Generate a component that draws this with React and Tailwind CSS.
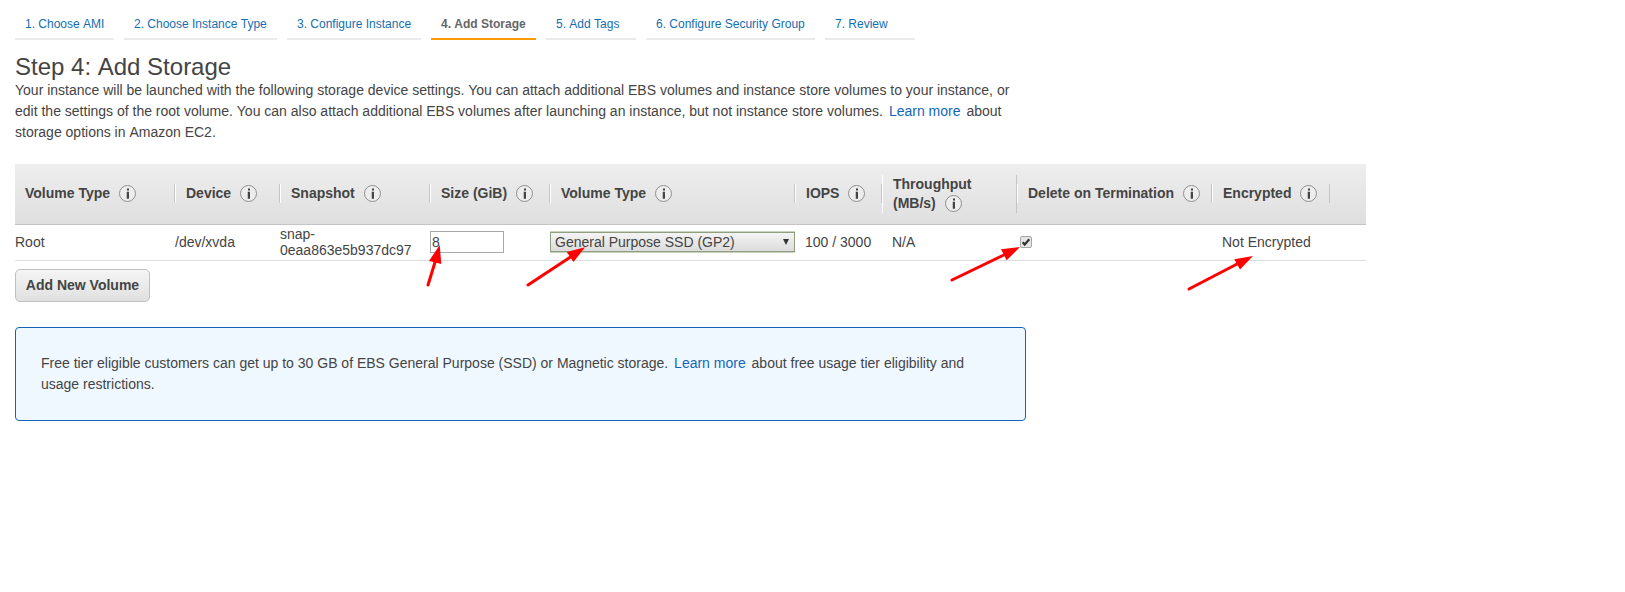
import React from "react";

const tabs = [
  { label: "1. Choose AMI", w: "w-[99px]" },
  { label: "2. Choose Instance Type", w: "w-[153px]" },
  { label: "3. Configure Instance", w: "w-[134px]" },
  { label: "4. Add Storage", w: "w-[105px]", active: true },
  { label: "5. Add Tags", w: "w-[90px]" },
  { label: "6. Configure Security Group", w: "w-[169px]" },
  { label: "7. Review", w: "w-[90px]" },
];

const columns = [
  { lines: ["Volume Type"], first: true },
  { lines: ["Device"] },
  { lines: ["Snapshot"] },
  { lines: ["Size (GiB)"] },
  { lines: ["Volume Type"] },
  { lines: ["IOPS"] },
  { lines: ["Throughput", "(MB/s)"] },
  { lines: ["Delete on Termination"] },
  { lines: ["Encrypted"] },
];

const grid = "grid grid-cols-[160px_105px_150px_120px_245px_87px_135px_195px_118px_36px]";

// Keeps words that start with A, T or Y from being kerned against the preceding space.
function Text({ children }) {
  return children
    .split(/(?<= )([ATY]\w*)/)
    .map((part, i) => (i % 2 ? <span key={i} className="inline-block">{part}</span> : part));
}

function Info() {
  return (
    <svg className="ml-[9px] h-[17px] w-[17px] shrink-0" viewBox="0 0 17 17" fill="none">
      <circle cx="8.5" cy="8.5" r="8" fill="#ededed" stroke="#8f8f8f" />
      <path d="M8 3.6h2v2h-2zM8 6.7h2v7h-2z" fill="#444" />
      <path d="M7 6.7h1v7h-1z" fill="#444" opacity="0.25" />
    </svg>
  );
}

function HeaderCell({ lines, first }) {
  return (
    <div
      className={`border-r border-r-[#c5c5c5] pl-[10px] leading-[19px] ${first ? "" : "border-l border-l-white"} ${
        lines.length > 1 ? "mt-[1px]" : ""
      }`}
    >
      {lines.map((line, i) => (
        <div key={line} className="flex h-[19px] items-center whitespace-nowrap">
          <span>{line}</span>
          {i === lines.length - 1 && <Info />}
        </div>
      ))}
    </div>
  );
}

function Link({ children }) {
  return <a className="mx-[2px] text-[#1166bb]">{children}</a>;
}

const arrows = [
  { from: [428, 285], to: [436, 259], head: "439.7,245 429,261 441.3,264" },
  { from: [528, 285], to: [572, 256], head: "585,247.3 566.7,252 573.5,262" },
  { from: [952, 280], to: [1006, 254], head: "1020,247 1001,249.3 1006.7,260.3" },
  { from: [1189, 289], to: [1239, 263], head: "1253,256 1234.3,259.3 1240,269.5" },
];

export default function App() {
  return (
    <div className="relative h-[592px] w-[1625px] overflow-hidden bg-white pl-[15px] font-['Liberation_Sans',Arial,sans-serif] text-[14px] text-[#444]">
      <nav className="flex gap-[10px] pt-[10px] text-[12px]">
        {tabs.map((t) => (
          <div
            key={t.label}
            className={`h-[30px] whitespace-nowrap border-b-2 pl-[10px] leading-[28px] ${t.w} ${
              t.active ? "border-[#ff9900] font-bold text-[#666]" : "border-[#eaeaea] text-[#146eb4]"
            }`}
          >
            <Text>{t.label}</Text>
          </div>
        ))}
      </nav>

      <h1 className="mt-[12px] h-[28px] text-[24px] leading-[30px]">
        <Text>Step 4: Add Storage</Text>
      </h1>
      <p className="w-[1000px] leading-[21px]">
        <Text>Your instance will be launched with the following storage device settings. You can attach additional EBS volumes and instance store volumes to your instance, or</Text>
        <br />
        <Text>edit the settings of the root volume. You can also attach additional EBS volumes after launching an instance, but not instance store volumes. </Text>
        <Link>Learn more</Link> about
        <br />
        <Text>storage options in Amazon EC2.</Text>
      </p>

      <section className="mt-[21px] w-[1351px]">
        <div className={`${grid} h-[61px] items-center border-b border-[#c5c5c5] bg-linear-to-b from-[#eeeeee] to-[#dfdfdf] pb-[1px] font-bold`}>
          {columns.map((c, i) => (
            <HeaderCell key={i} {...c} />
          ))}
        </div>
        <div className={`${grid} h-[36px] items-center border-b border-[#dddddd] pb-[1px] leading-[16px]`}>
          <div>Root</div>
          <div>/dev/xvda</div>
          <div>
            snap-
            <br />
            0eaa863e5b937dc97
          </div>
          <div className="flex h-[22px] w-[74px] items-center border border-[#a9a9a9] pl-[1px]">8</div>
          <div className="flex h-[20px] w-[245px] items-center justify-between border border-[#8f9f80] bg-linear-to-b from-[#f4f4f4] to-[#dcdcdc] pl-[4px] pr-[5px] shadow-[0_1px_0_#c9d1c0,0_-1px_0_#c9d1c0]">
            <span>General Purpose SSD (GP2)</span>
            <svg className="h-[6px] w-[6px]" viewBox="0 0 6 6">
              <path d="M0 0h6L3 6z" fill="#333" />
            </svg>
          </div>
          <div className="pl-[10px]">100 / 3000</div>
          <div className="pl-[10px]">N/A</div>
          <div className="pl-[3px]">
            <svg className="block h-[12px] w-[12px]" viewBox="0 0 12 12">
              <rect x=".5" y=".5" width="11" height="11" rx="1.5" fill="#e6e6e6" stroke="#a6a6a6" />
              <path d="M2.7 6.2 4.7 8.5 9.3 3.2" fill="none" stroke="#333" strokeWidth="2.2" />
            </svg>
          </div>
          <div className="pl-[10px]">Not Encrypted</div>
        </div>
      </section>

      <button className="mt-[8px] block h-[33px] w-[135px] rounded-[5px] border border-[#c0c0c0] bg-linear-to-b from-[#f5f5f5] to-[#e0e0e0] text-center font-bold">
        Add New Volume
      </button>

      <aside className="mt-[25px] h-[94px] w-[1011px] rounded-[4px] border border-[#1166bb] bg-[#f0f8ff] pl-[25px] pt-[25px] leading-[21px]">
        Free tier eligible customers can get up to 30 GB of EBS General Purpose (SSD) or Magnetic storage. <Link>Learn more</Link> about free usage tier eligibility and
        <br />
        usage restrictions.
      </aside>

      <svg className="pointer-events-none absolute left-0 top-0 h-[592px] w-[1625px]" viewBox="0 0 1625 592" fill="red" stroke="red">
        {arrows.map((a) => (
          <g key={a.head}>
            <line x1={a.from[0]} y1={a.from[1]} x2={a.to[0]} y2={a.to[1]} strokeWidth="3" strokeLinecap="round" />
            <polygon points={a.head} stroke="none" />
          </g>
        ))}
      </svg>
    </div>
  );
}
